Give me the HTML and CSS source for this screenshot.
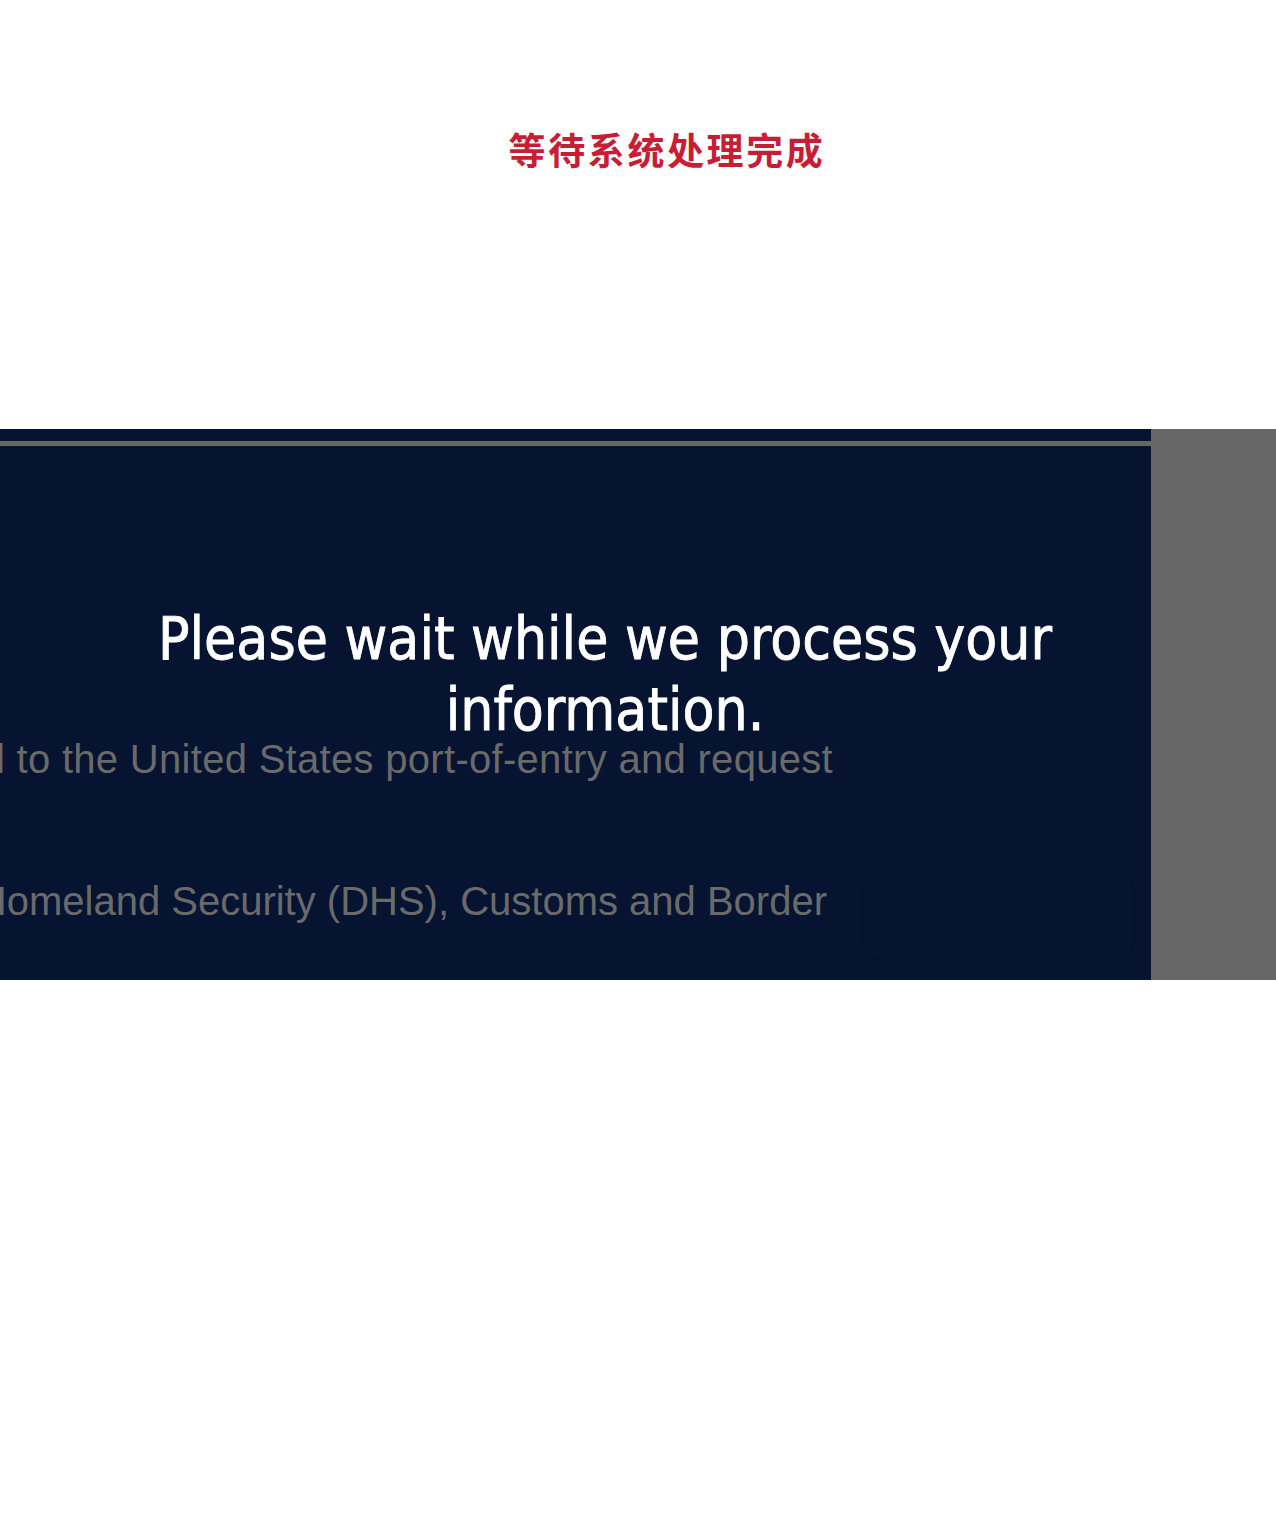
FILE: index.html
```html
<!DOCTYPE html>
<html lang="zh-CN">
<head>
  <meta charset="UTF-8">
  <title>等待系统处理完成</title>
  <link rel="stylesheet" href="styles.css">
</head>
<body>
  <div class="title-wrap">
    <h1 class="title">等待系统处理完成</h1>
  </div>

  <div class="shot">
    <div class="panel">
      <div class="rule"></div>
      <div class="backdrop">
        <p class="line line-one">travel to the United States port-of-entry and request</p>
        <p class="line line-two">of Homeland Security (DHS), Customs and Border</p>
        <div class="ghost-btn"></div>
      </div>
      <h2 class="wait">Please wait while we process your information.</h2>
    </div>
    <div class="side"></div>
  </div>
</body>
</html>
```

FILE: styles.css
```css
body {
  margin: 0;
  background: #fff;
  font-family: "Liberation Sans", Arial, sans-serif;
}
.title-wrap {
  height: 429px;
  padding-top: 125px;
  box-sizing: border-box;
  text-align: center;
  padding-left: 58px;
}
.title {
  margin: 0;
  font-family: "Noto Sans CJK SC", sans-serif;
  font-weight: 700;
  font-size: 37px;
  letter-spacing: 2.6px;
  line-height: 48px;
  color: #c81e35;
}
.shot {
  display: grid;
  grid-template-columns: 1151px 1fr;
  height: 551px;
}
.panel {
  position: relative;
  background: #061432;
  overflow: hidden;
}
.side {
  background: #676767;
}
.rule {
  height: 5px;
  margin-top: 12px;
  background: #666;
}
.backdrop {
  position: absolute;
  left: 0;
  top: 0;
  width: 100%;
  height: 100%;
}
.line {
  display: flex;
  justify-content: flex-end;
  margin: 0;
  white-space: nowrap;
  font-size: 40px;
  letter-spacing: 0.3px;
  color: #6a6a6a;
  line-height: 44px;
}
.line-one {
  margin-top: 308px;
  padding-right: 318px;
}
.line-two {
  margin-top: 98px;
  padding-right: 324px;
  letter-spacing: 0;
}
.ghost-btn {
  position: absolute;
  left: 862px;
  top: 448px;
  width: 270px;
  height: 78px;
  border: 2px solid rgba(0, 0, 0, 0.07);
  border-radius: 18px;
}
.wait {
  position: relative;
  margin: 158px 0 0 125px;
  width: 960px;
  text-align: center;
  font-family: "DejaVu Sans Condensed", "DejaVu Sans", sans-serif;
  font-weight: 400;
  font-size: 58.2px;
  line-height: 71px;
  color: #fff;
  -webkit-text-stroke: 0.8px #fff;
}
```
